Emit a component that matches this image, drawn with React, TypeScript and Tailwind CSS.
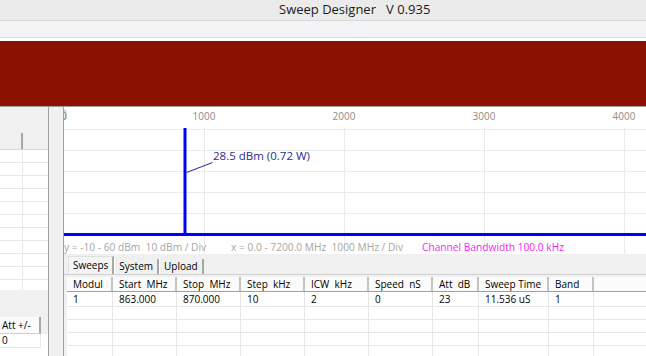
const columns = [
  { name: 'Modul', w: 'w-[46px]' },
  { name: 'Start  MHz', w: 'w-[64px]' },
  { name: 'Stop  MHz', w: 'w-[64px]' },
  { name: 'Step  kHz', w: 'w-[64px]' },
  { name: 'ICW  kHz', w: 'w-[64px]' },
  { name: 'Speed  nS', w: 'w-[64px]' },
  { name: 'Att  dB', w: 'w-[46px]' },
  { name: 'Sweep Time', w: 'w-[70px]' },
  { name: 'Band', w: 'w-[45px]' },
];

const sweepRow = ['1', '863.000', '870.000', '10', '2', '0', '23', '11.536 uS', '1'];

const axisLabels = [
  { label: '0', x: 0 },
  { label: '1000', x: 140 },
  { label: '2000', x: 280 },
  { label: '3000', x: 420 },
  { label: '4000', x: 560 },
];

function Chart() {
  return (
    <div className="relative h-[147px] shrink-0 bg-white overflow-hidden">
      <svg className="absolute inset-0" width="582" height="147">
        {[22, 43, 64, 85, 106].map((y) => (
          <line key={y} x1="0" x2="582" y1={y + 0.5} y2={y + 0.5} stroke="#ebebeb" />
        ))}
        {[140, 280, 420, 560].map((x) => (
          <line key={x} x1={x + 0.5} x2={x + 0.5} y1="21" y2="147" stroke="#ebebeb" />
        ))}
        <line x1="0" x2="582" y1="127.5" y2="127.5" stroke="#0000ff" strokeWidth="3" />
        <line x1="121" x2="121" y1="21" y2="128" stroke="#0000ff" strokeWidth="3" />
        <line x1="122.5" y1="65.5" x2="148.5" y2="55.5" stroke="#22229a" strokeWidth="1" />
      </svg>
      <div className="absolute left-[-1px] top-[3px] w-[3px] h-[9px] bg-[#fdf0c8] border border-[#9ab8dc] rounded-[1px]" />
      {axisLabels.map((a) => (
        <div
          key={a.label}
          className="absolute top-[2px] w-[40px] -ml-[20px] text-center text-[10px] text-[#8c8c8c]"
          style={{ left: a.x }}
        >
          {a.label}
        </div>
      ))}
      <div className="absolute left-[149px] top-[40px] text-[11.5px] text-[#2a2a9c] whitespace-nowrap">
        28.5 dBm (0.72 W)
      </div>
      <div className="absolute left-0 right-0 top-[133px] flex text-[10.2px] whitespace-pre">
        <span className="w-[167px] text-[#a6a6a6]">y = -10 - 60 dBm  10 dBm / Div</span>
        <span className="w-[191px] text-[#a6a6a6]">x = 0.0 - 7200.0 MHz  1000 MHz / Div</span>
        <span className="text-[#ff1aff]">Channel Bandwidth 100.0 kHz</span>
      </div>
    </div>
  );
}

function Tabs() {
  return (
    <div className="h-[21px] shrink-0 flex items-end pl-[4px] border-b border-[#d0d0d0] text-[10px]">
      <div className="h-[18px] px-[4px] flex items-center bg-[#f4f4f4] border-t border-l border-[#e0e0e0] border-r-[2px] border-r-[#a8a8a8]">
        Sweeps
      </div>
      <div className="h-[15px] px-[4px] flex items-center border-l border-[#ffffff] border-r-[2px] border-r-[#a8a8a8]">
        System
      </div>
      <div className="h-[15px] px-[4px] flex items-center border-l border-[#ffffff] border-r-[2px] border-r-[#a8a8a8]">
        Upload
      </div>
    </div>
  );
}

function SweepTable() {
  return (
    <div className="flex-1 min-h-0 ml-[3px] mt-[2px] bg-white overflow-hidden text-[10px]">
      <div className="h-[15px] flex border-b border-[#a0a0a0] bg-[#fbfbfb]">
        {columns.map((c) => (
          <div
            key={c.name}
            className={`${c.w} shrink-0 pl-[6px] flex items-center whitespace-pre border-r-[2px] border-r-[#c4c4c4]`}
          >
            {c.name}
          </div>
        ))}
        <div className="flex-1" />
      </div>
      <div className="h-[15px] flex border-b border-[#e6e6e6]">
        {columns.map((c, i) => (
          <div key={c.name} className={`${c.w} shrink-0 pl-[6px] flex items-center border-r border-[#e6e6e6]`}>
            {sweepRow[i]}
          </div>
        ))}
      </div>
      {[0, 1, 2, 3, 4].map((r) => (
        <div key={r} className="h-[13px] flex border-b border-[#e6e6e6]">
          {columns.map((c) => (
            <div key={c.name} className={`${c.w} shrink-0 border-r border-[#e6e6e6]`} />
          ))}
        </div>
      ))}
    </div>
  );
}

function LeftPanel() {
  return (
    <div className="w-[49px] shrink-0 flex flex-col border-r border-[#a0a0a0] text-[10px]">
      <div className="h-[26px] shrink-0" />
      <div className="h-[17px] shrink-0 flex border-b border-[#d8d8d8]">
        <div className="w-[23px] border-r-[2px] border-r-[#a8a8a8]" />
        <div className="flex-1" />
      </div>
      <div className="h-[140px] shrink-0 bg-white overflow-hidden">
        {Array.from({ length: 11 }).map((_, i) => (
          <div key={i} className="h-[13px] flex border-b border-[#e8e8e8]">
            <div className="w-[23px] border-r border-[#e8e8e8]" />
          </div>
        ))}
      </div>
      <div className="h-[27px] shrink-0" />
      <div className="h-[17px] shrink-0 flex">
        <div className="w-[41px] pl-[2px] flex items-center bg-[#fbfbfb] border-b border-[#d0d0d0] border-r-[2px] border-r-[#a8a8a8]">
          Att +/-
        </div>
      </div>
      <div className="flex-1 flex bg-white">
        <div className="w-[41px] h-[14px] pl-[2px] flex items-center border-r border-b border-[#e8e8e8]">0</div>
      </div>
    </div>
  );
}

export default function App() {
  return (
    <div className="w-[646px] h-[356px] overflow-hidden flex flex-col bg-[#f0f0f0] text-black font-['Open_Sans',sans-serif] text-[12px]">
      <div className="h-[21px] shrink-0 flex items-center pl-[279px] bg-[#ebebeb] border-b border-[#d9d9d9] text-[13px] text-[#1b1b1b] whitespace-pre">
        Sweep Designer   V 0.935
      </div>
      <div className="h-[17px] shrink-0 bg-[#f3f4f6] border-b border-[#dadada]" />
      <div className="h-[3px] shrink-0 bg-white" />
      <div className="h-[65px] shrink-0 bg-[#8b1100]" />
      <div className="h-[1px] shrink-0 bg-[#a0a0a0]" />
      <div className="flex flex-1 min-h-0">
        <LeftPanel />
        <div className="w-[15px] shrink-0 border-r border-[#a0a0a0]" />
        <div className="flex-1 min-w-0 flex flex-col">
          <Chart />
          <Tabs />
          <SweepTable />
        </div>
      </div>
    </div>
  );
}
